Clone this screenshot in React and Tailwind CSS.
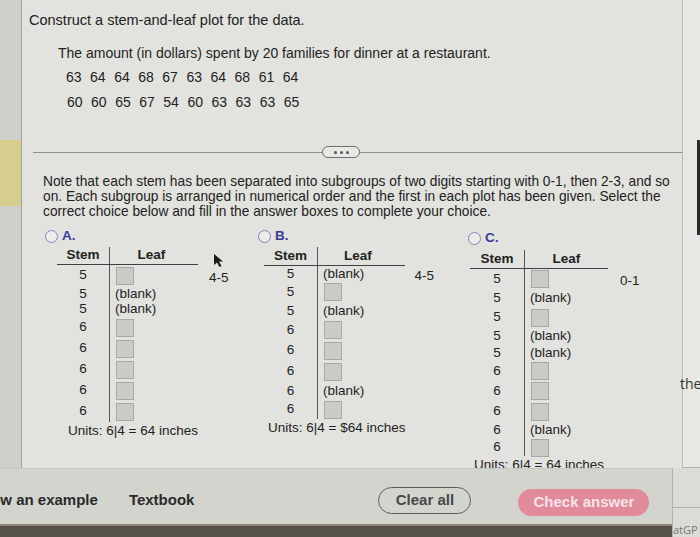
import React from 'react';

const rowsA = [
  { s: '5', t: 'box', h: 21 },
  { s: '5', t: 'blank', h: 16 },
  { s: '5', t: 'blank', h: 15 },
  { s: '6', t: 'box', h: 21 },
  { s: '6', t: 'box', h: 21 },
  { s: '6', t: 'box', h: 21 },
  { s: '6', t: 'box', h: 21 },
  { s: '6', t: 'box', h: 21 },
];

const rowsB = [
  { s: '5', t: 'blank', h: 16 },
  { s: '5', t: 'box', h: 20 },
  { s: '5', t: 'blank', h: 18 },
  { s: '6', t: 'box', h: 20 },
  { s: '6', t: 'box', h: 21 },
  { s: '6', t: 'box', h: 21 },
  { s: '6', t: 'blank', h: 18 },
  { s: '6', t: 'box', h: 19 },
];

const rowsC = [
  { s: '5', t: 'box', h: 20 },
  { s: '5', t: 'blank', h: 19 },
  { s: '5', t: 'box', h: 19 },
  { s: '5', t: 'blank', h: 18 },
  { s: '5', t: 'blank', h: 16 },
  { s: '6', t: 'box', h: 20 },
  { s: '6', t: 'box', h: 20 },
  { s: '6', t: 'box', h: 21 },
  { s: '6', t: 'blank', h: 17 },
  { s: '6', t: 'box', h: 17 },
];

const Box = () => (
  <div className="w-[18px] h-[18px] bg-[#cbcbc7] border border-[#a9a9a4]" />
);

// stem-and-leaf table with the side label ("4-5", "0-1")
const Plot = ({ rows, stemW, leafW, headH, side, sideGap, sideTop, units, unitsPad, children }) => (
  <div className="flex">
    <div className="flex flex-col">
      <div className="flex border-b border-[#3f3f3f]" style={{ height: headH }}>
        <div className="flex items-center justify-center font-bold border-r border-[#555]" style={{ width: stemW }}>
          Stem
        </div>
        <div className="flex items-center justify-center font-bold" style={{ width: leafW }}>
          Leaf
        </div>
      </div>
      {rows.map((r, i) => (
        <div key={i} className="flex" style={{ height: r.h }}>
          <div className="flex items-center justify-center border-r border-[#555]" style={{ width: stemW }}>
            {r.s}
          </div>
          <div className={`flex items-center ${r.t === 'box' ? 'pl-[6px]' : 'pl-[5px]'}`}>
            {r.t === 'box' ? <Box /> : '(blank)'}
          </div>
        </div>
      ))}
      <div className="h-[18px] flex items-center whitespace-nowrap" style={{ paddingLeft: unitsPad }}>
        {units}
      </div>
    </div>
    <div className="relative" style={{ marginLeft: sideGap, paddingTop: sideTop }}>
      {children}
      <span>{side}</span>
    </div>
  </div>
);

const Radio = ({ label }) => (
  <div className="flex items-center h-[14px]">
    <span className="w-[13px] h-[13px] rounded-full border-[1.5px] border-[#8286b8] bg-[#ececea]" />
    <span className="ml-[4px] font-bold text-[#3a3a9c]">{label}</span>
  </div>
);

export default function App() {
  return (
    <div className="w-[700px] h-[537px] overflow-hidden flex flex-col bg-[#d9d9d4] text-[#222] font-['Liberation_Sans',Arial,sans-serif]">
      {/* top area */}
      <div className="h-[468px] flex">
        {/* left strip */}
        <div className="w-[21px] bg-[#d0d0cb] flex flex-col">
          <div className="h-[140px]" />
          <div className="h-[66px] bg-[#d7ce8e]" />
        </div>

        {/* main panel */}
        <div className="flex-1 overflow-hidden bg-[#e2e2de] border-l border-[#a3a39e] text-[14px]">
          <div className="pt-[10px] pl-[7px]">
            <p className="text-[14.5px] leading-[20px]">Construct a stem-and-leaf plot for the data.</p>
            <div className="pl-[29px] mt-[13px]">
              <p className="leading-[20px]">The amount (in dollars) spent by 20 families for dinner at a restaurant.</p>
              <div className="pl-[8px] mt-[4px] flex gap-[8.5px] leading-[20px]">
                {['63', '64', '64', '68', '67', '63', '64', '68', '61', '64'].map((n, i) => (
                  <span key={i}>{n}</span>
                ))}
              </div>
              <div className="pl-[9px] mt-[5px] flex gap-[8.5px] leading-[20px]">
                {['60', '60', '65', '67', '54', '60', '63', '63', '63', '65'].map((n, i) => (
                  <span key={i}>{n}</span>
                ))}
              </div>
            </div>
          </div>

          {/* separator */}
          <div className="mt-[34px] ml-[11px] flex items-center h-[12px]">
            <div className="w-[289px] border-t border-[#8e8e8a]" />
            <div className="w-[38px] h-[12px] rounded-full border border-[#6f6f6b] bg-[#e8e8e4] flex items-center justify-center gap-[3px]">
              <span className="w-[3px] h-[3px] rounded-full bg-[#555]" />
              <span className="w-[3px] h-[3px] rounded-full bg-[#555]" />
              <span className="w-[3px] h-[3px] rounded-full bg-[#555]" />
            </div>
            <div className="flex-1 border-t border-[#8e8e8a]" />
          </div>

          <p className="mt-[16px] ml-[21px] text-[13.75px] leading-[15px] whitespace-nowrap">
            Note that each stem has been separated into subgroups of two digits starting with 0-1, then 2-3, and so
            <br />
            on. Each subgroup is arranged in numerical order and the first in each plot has been given. Select the
            <br />
            correct choice below and fill in the answer boxes to complete your choice.
          </p>

          {/* choices */}
          <div className="mt-[10px] ml-[23px] flex text-[13.5px]">
            <div className="w-[213px] flex flex-col">
              <Radio label="A." />
              <div className="mt-[4px] ml-[12px]">
                <Plot
                  rows={rowsA}
                  stemW={53}
                  leafW={83}
                  headH={18}
                  side="4-5"
                  sideGap={11}
                  sideTop={21}
                  units="Units: 6|4 = 64 inches"
                  unitsPad={11}
                >
                  <svg className="absolute left-[4px] top-[6px]" width="12" height="15" viewBox="0 0 12 15">
                    <path d="M1 1 L1 12 L4 9.5 L6.5 14 L8.5 13 L6 8.5 L10 8.5 Z" fill="#1a1a1a" />
                  </svg>
                </Plot>
              </div>
            </div>

            <div className="w-[210px] flex flex-col">
              <Radio label="B." />
              <div className="mt-[4px] ml-[6px]">
                <Plot
                  rows={rowsB}
                  stemW={54}
                  leafW={80}
                  headH={19}
                  side="4-5"
                  sideGap={9}
                  sideTop={19}
                  units="Units: 6|4 = $64 inches"
                  unitsPad={4}
                />
              </div>
            </div>

            <div className="flex flex-col mt-[2px]">
              <Radio label="C." />
              <div className="mt-[5px] ml-[2px]">
                <Plot
                  rows={rowsC}
                  stemW={55}
                  leafW={83}
                  headH={19}
                  side="0-1"
                  sideGap={12}
                  sideTop={21}
                  units="Units: 6|4 = 64 inches"
                  unitsPad={4}
                />
              </div>
            </div>
          </div>
        </div>

        {/* right window edge */}
        <div className="w-[18px] relative bg-[#e7e7e3] border-l border-[#b9b9b4] flex flex-col">
          <div className="h-[140px]" />
          <div className="ml-auto w-[3px] h-[95px] bg-[#2a2a2a]" />
          <div className="mt-[138px] ml-[-3px] text-[14px] text-[#333] font-['Open_Sans',sans-serif] whitespace-nowrap">the</div>
          <div className="mt-auto border-t border-[#b5b5b0]" />
        </div>
      </div>

      {/* bottom bar */}
      <div className="flex-1 flex">
        <div className="flex-1 flex flex-col">
          <div className="h-[56px] bg-[#d4d4cf] border-t border-[#c9c9c4] flex items-center pt-[8px] text-[15px] font-bold text-[#2a2a2a] whitespace-nowrap">
            <span className="ml-[-28px]">Show an example</span>
            <span className="ml-[31px]">Textbook</span>
            <button className="ml-[184px] w-[93px] h-[27px] rounded-full border-[1.5px] border-[#5c5c5c] text-[#474747] font-semibold">
              Clear all
            </button>
            <button className="ml-[47px] w-[131px] h-[27px] mt-[3px] rounded-full bg-[#e08a9a] text-[#f7e4e8]">
              Check answer
            </button>
          </div>
          <div className="flex-1 bg-[#57514b] border-t-2 border-[#8a847c]" />
        </div>
        <div className="w-[28px] bg-[#dcdcd7] border-l border-[#b4b4af] flex flex-col">
          <div className="h-[40px] border-b border-[#b4b4af]" />
          <div className="mt-auto text-[11px] leading-[14px] text-[#777] font-['Open_Sans',sans-serif] whitespace-nowrap">atGP</div>
        </div>
      </div>
    </div>
  );
}
